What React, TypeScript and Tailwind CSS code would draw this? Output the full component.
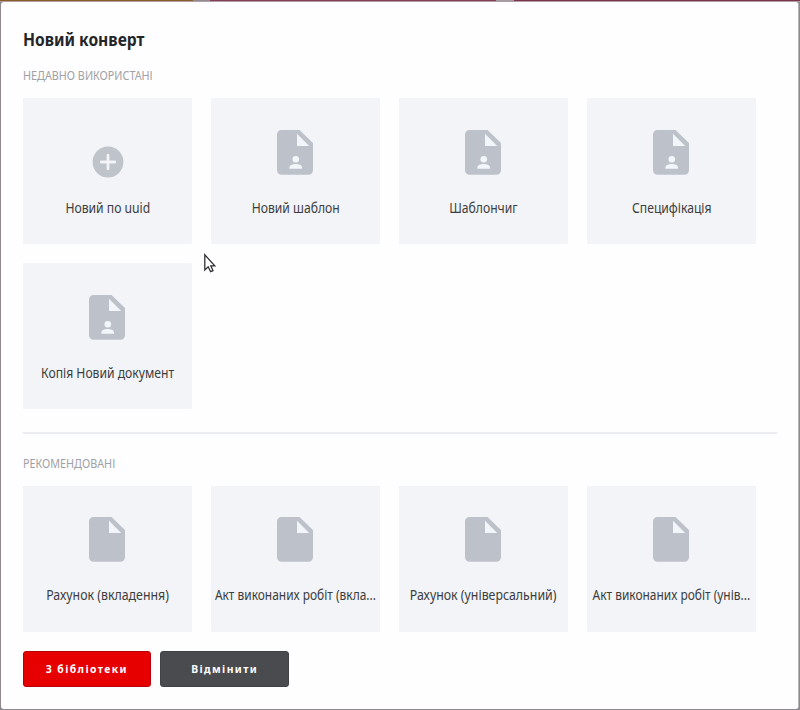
import React from "react";

type Kind = "add" | "template" | "document";

interface Item {
  title: string;
  kind: Kind;
  long?: boolean;
}

const recent: Item[] = [
  { title: "Новий по uuid", kind: "add" },
  { title: "Новий шаблон", kind: "template" },
  { title: "Шаблончиг", kind: "template" },
  { title: "Специфікація", kind: "template" },
  { title: "Копія Новий документ", kind: "template" },
];

const recommended: Item[] = [
  { title: "Рахунок (вкладення)", kind: "document" },
  { title: "Акт виконаних робіт (вкла...", kind: "document", long: true },
  { title: "Рахунок (універсальний)", kind: "document" },
  { title: "Акт виконаних робіт (унів...", kind: "document", long: true },
];

function AddIcon() {
  return (
    <svg width="32" height="32" viewBox="0 0 32 32" className="mt-[48px] block">
      <circle cx="16" cy="16" r="15.4" fill="#bfc3ca" />
      <path d="M16 9.2v13.6M9.2 16h13.6" stroke="#f2f4f7" strokeWidth="2.8" strokeLinecap="round" />
    </svg>
  );
}

function FileIcon({ person }: { person: boolean }) {
  return (
    <svg
      width="36"
      height="45"
      viewBox="0 0 36 45"
      className={person ? "mt-[31.500px] mr-[1px] block" : "mt-[31px] mr-[1px] block"}
    >
      <path
        d="M4.500 0H22.500L36 13V40.200A4.500 4.500 0 0 1 31.500 44.700H4.500A4.500 4.500 0 0 1 0 40.200V4.500A4.500 4.500 0 0 1 4.500 0Z"
        fill="#bdc2ca"
      />
      <path d="M20 3.800V16H32.200Z" fill="#f2f6fa" />
      {person && (
        <g fill="#f2f6fa">
          <circle cx="18.800" cy="29.200" r="3.300" />
          <path d="M12.400 38.800V37.600C12.400 34.900 15.800 34 18.700 34S25 34.900 25 37.600V38.800Z" />
        </g>
      )}
    </svg>
  );
}

function Card({ item }: { item: Item }) {
  const gap = item.kind === "add" ? "mt-5" : item.kind === "template" ? "mt-[23.500px]" : "mt-[23px]";
  const width = item.long ? "scale-x-[0.853]" : item.kind === "document" ? "scale-x-[0.882]" : "scale-x-[0.868]";
  return (
    <button className="flex h-[146px] w-[169px] flex-col items-center rounded-[1px] bg-[#f2f4f7]">
      {item.kind === "add" ? <AddIcon /> : <FileIcon person={item.kind === "template"} />}
      <span className={`block text-[14px] leading-[20px] whitespace-nowrap text-[#3c3d40] ${gap} ${width}`}>
        {item.title}
      </span>
    </button>
  );
}

function SectionLabel({ children }: { children: React.ReactNode }) {
  return (
    <h2 className="origin-left scale-x-[0.9] text-[12px] leading-4 whitespace-nowrap text-[#a0a1a4]">{children}</h2>
  );
}

export default function App() {
  return (
    <div className="relative flex h-[710px] w-[800px] flex-col overflow-hidden bg-[#8d898e] font-['Noto_Sans','Open_Sans',sans-serif]">
      <div className="flex h-px shrink-0">
        <div className="w-[193px] bg-[#8c5c27]" />
        <div className="w-[17px] bg-[#8f8b8f]" />
        <div className="w-[286px] bg-[#843e53]" />
        <div className="w-[18px] bg-[#a39a9e]" />
        <div className="flex-1 bg-[#793448]" />
      </div>
      <div className="h-px shrink-0 bg-[#b09da5]" />
      <main className="mr-px ml-px flex h-[707px] shrink-0 flex-col rounded-[3px] border-r border-[#b9b6ba] bg-[#fefdff] pl-[22px]">
        <h1 className="mt-[26px] origin-left scale-x-[0.918] text-[17px] leading-6 font-bold text-[#242528]">
          Новий конверт
        </h1>
        <div className="mt-4">
          <SectionLabel>НЕДАВНО ВИКОРИСТАНІ</SectionLabel>
        </div>
        <div className="mt-[14px] grid grid-cols-[repeat(4,169px)] gap-x-[19px] gap-y-[19px]">
          {recent.map((item) => (
            <Card key={item.title} item={item} />
          ))}
        </div>
        <div className="mt-[23px] h-[2px] w-[754px] bg-[#eaecf1]" />
        <div className="mt-[22px]">
          <SectionLabel>РЕКОМЕНДОВАНІ</SectionLabel>
        </div>
        <div className="mt-[14px] grid grid-cols-[repeat(4,169px)] gap-x-[19px]">
          {recommended.map((item) => (
            <Card key={item.title} item={item} />
          ))}
        </div>
        <div className="mt-[18.500px] flex gap-[9px]">
          <button className="h-[36.500px] w-[128px] rounded-[3px] border border-[#b80009] bg-[#e60000] text-[11px] font-bold tracking-[1.500px] text-white">
            <span className="inline-block scale-x-[0.94]">З бібліотеки</span>
          </button>
          <button className="h-[36.500px] w-[128.500px] rounded-[3px] border border-[#414245] bg-[#4a4b4e] text-[11px] font-bold tracking-[1.500px] text-white">
            <span className="inline-block scale-x-[0.94]">Відмінити</span>
          </button>
        </div>
      </main>
      <svg width="13" height="20" viewBox="0 0 13 20" className="absolute top-[253px] left-[203px]">
        <path
          d="M1.800 1.800V17L5.200 13.800L7.600 18.700L10 17.600L7.800 12.800H11.800Z"
          fill="#fff"
          stroke="#303034"
          strokeWidth="1.300"
        />
      </svg>
    </div>
  );
}
